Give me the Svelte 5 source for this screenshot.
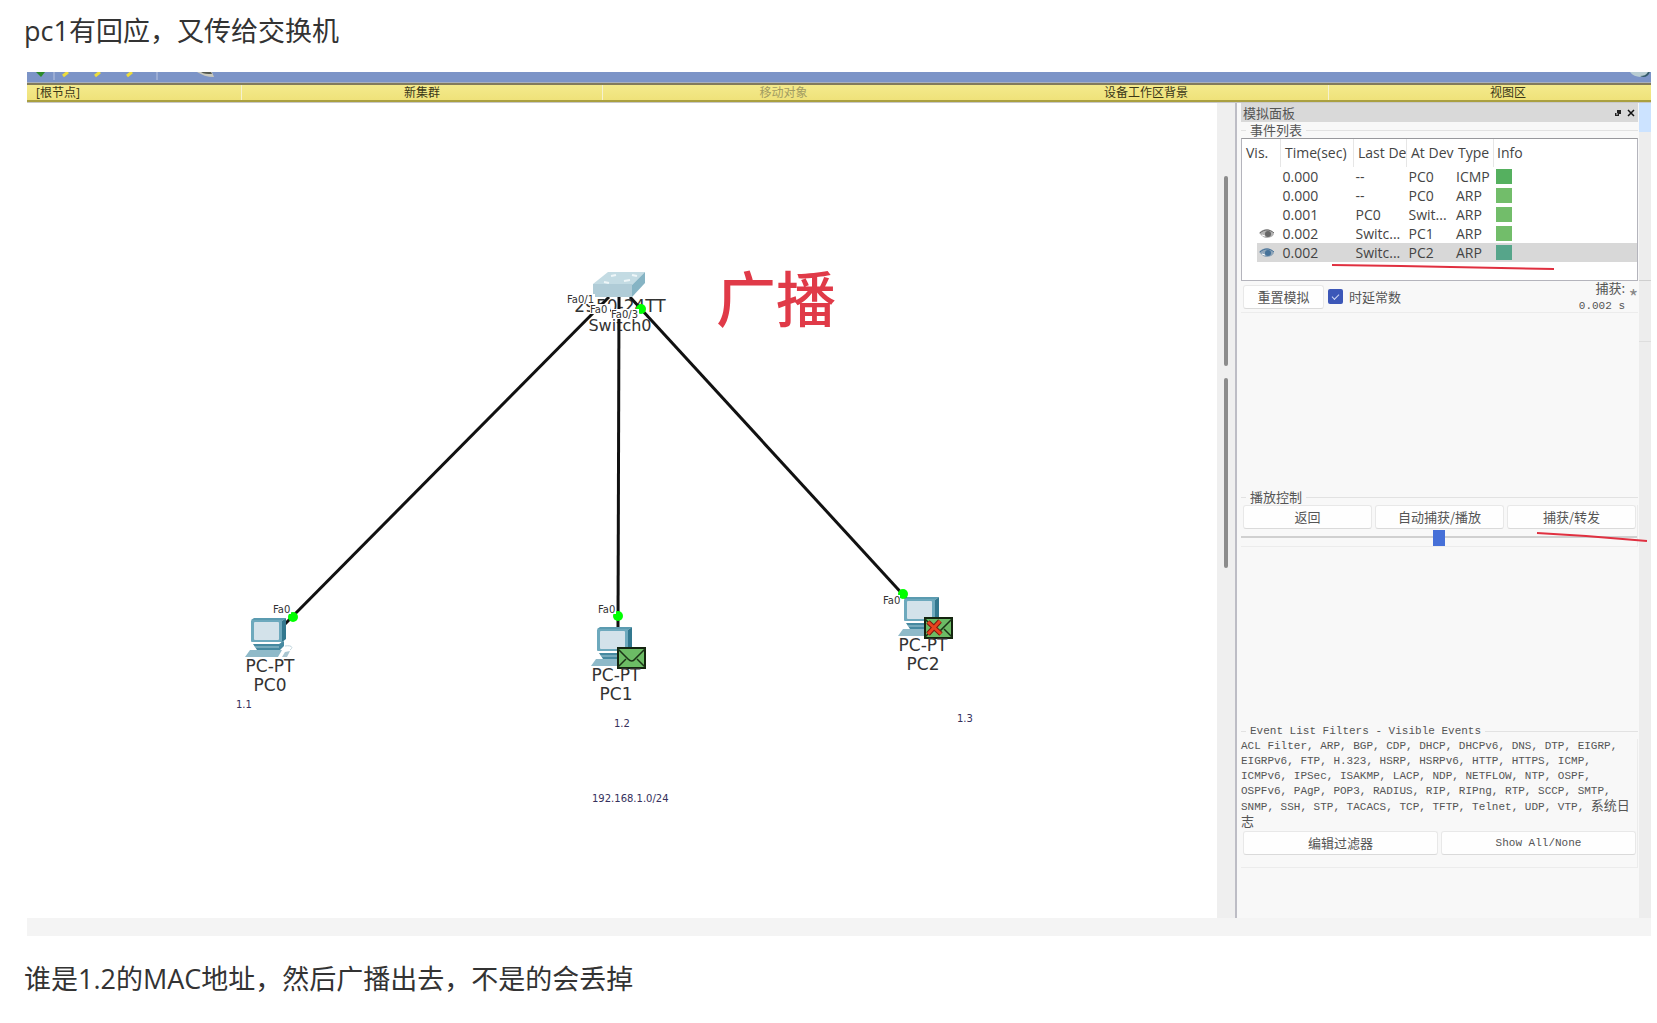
<script>
  const menu = [
    { text: '[根节点]', kind: 'root' },
    { text: '新集群', kind: '' },
    { text: '移动对象', kind: 'muted' },
    { text: '设备工作区背景', kind: 'joined' },
    { text: '视图区', kind: 'last' },
  ];
  const heads = ['Vis.', 'Time(sec)', 'Last Device', 'At Device', 'Type', 'Info'];
  const events = [
    { eye: false, time: '0.000', last: '--', at: 'PC0', type: 'ICMP', tone: 'icmp' },
    { eye: false, time: '0.000', last: '--', at: 'PC0', type: 'ARP', tone: 'arp' },
    { eye: false, time: '0.001', last: 'PC0', at: 'Swit...', type: 'ARP', tone: 'arp' },
    { eye: true, time: '0.002', last: 'Switc...', at: 'PC1', type: 'ARP', tone: 'arp' },
    { eye: true, time: '0.002', last: 'Switc...', at: 'PC2', type: 'ARP', tone: 'picked' },
  ];
  const filters =
    'ACL Filter, ARP, BGP, CDP, DHCP, DHCPv6, DNS, DTP, EIGRP, EIGRPv6, FTP, H.323, HSRP, HSRPv6, HTTP, HTTPS, ICMP, ICMPv6, IPSec, ISAKMP, LACP, NDP, NETFLOW, NTP, OSPF, OSPFv6, PAgP, POP3, RADIUS, RIP, RIPng, RTP, SCCP, SMTP, SNMP, SSH, STP, TACACS, TCP, TFTP, Telnet, UDP, VTP,';
  const hosts = [
    { name: 'PC0', x: 252, y: 620, mail: '' },
    { name: 'PC1', x: 598, y: 629, mail: 'ok' },
    { name: 'PC2', x: 905, y: 599, mail: 'drop' },
  ];
  const ports = [
    { text: 'Fa0/1', x: 567, y: 303, w: 28 },
    { text: 'Fa0', x: 590, y: 313, w: 20 },
    { text: 'Fa0/3', x: 611, y: 318, w: 28 },
    { text: 'Fa0', x: 273, y: 613, w: 18 },
    { text: 'Fa0', x: 598, y: 613, w: 18 },
    { text: 'Fa0', x: 883, y: 604, w: 17 },
  ];
  const notes = [
    { text: '1.1', x: 236, y: 708 },
    { text: '1.2', x: 614, y: 727 },
    { text: '1.3', x: 957, y: 722 },
    { text: '192.168.1.0/24', x: 592, y: 802 },
  ];
  let constantDelay = $state(true);
  let speed = $state(50);
</script>

<main>
  <p>pc1有回应，又传给交换机</p>

  <section class="window">
    <div class="toolbar">
      <svg width="200" height="10" viewBox="27 72 200 10" aria-hidden="true">
        <path d="M36 72h9l-4 5z" fill="#2b8a2b" />
        <path d="M54 72v8M157 72v8" stroke="#b9c4df" />
        <path d="M63 76l5-4M95 76l5-4M127 76l5-4" stroke="#ecdc3c" stroke-width="3" />
        <path d="M197 72h15l2 5c-7 0-12-2-17-5z" fill="#c9c9bd" />
        <path d="M201 72h10l1 2c-5 0-8 0-11-2z" fill="#54584f" />
      </svg>
      <svg width="24" height="10" viewBox="0 0 24 10" aria-hidden="true">
        <path d="M3 0h20c-3 6-15 7-20 0z" fill="#b9cdd2" />
        <path d="M13 4c4 0 6-1 8-4h2c-2 5-6 6-10 4z" fill="#345b6b" />
      </svg>
    </div>
    <nav class="menu">
      {#each menu as item}
        <button class={item.kind}>{item.text}</button>
      {/each}
    </nav>

    <div class="body">
      <div class="canvas">
        <svg width="1190" height="812" viewBox="27 103 1190 812">
          <text class="device" x="620" y="312" text-anchor="middle">2950-24TT</text>
          <text class="device small" x="620" y="331" text-anchor="middle">Switch0</text>
          <g stroke="#111" stroke-width="3" fill="none">
            <path d="M609 297L285 624" />
            <path d="M619 297L618 630" />
            <path d="M630 297L907 599" />
          </g>
          <path d="M593 284L608 272H645L632 285z" fill="#c3dbe3" />
          <path d="M593 284H632V297H595L593 295z" fill="#b0ccd7" />
          <path d="M632 285L645 272V283L632 297z" fill="#86b4c4" />
          <path d="M611 276l5-1M632 275l5 1M604 282l5 1M624 281l6-1" stroke="#eef6f8" stroke-width="2" />
          <circle cx="641" cy="309" r="5" fill="#0f0" />

          {#each hosts as host}
            <g transform={`translate(${host.x} ${host.y})`}>
              <g transform="translate(-1 -2)">
                <path d="M0 2L3 0H35L31 3z" fill="#5b9bb0" />
                <path d="M31 3L35 0V21L30 25z" fill="#32788f" />
                <rect y="2" width="31" height="22" rx="1" fill="#6da9bd" />
                <rect x="3" y="4" width="25" height="18" rx="1" fill="#d3e2ea" />
                <path d="M2 26H28L33 23V28L29 32H6z" fill="#4689a0" />
                <path d="M-1 32H31L27 39H-6z" fill="#8fbac9" />
                <path d="M4 29h24" stroke="#a5cad6" />
              </g>
              {#if host.mail === ''}
                <path d="M30 37l3-5 5-1-3 6z" fill="#a9c6d1" />
                <path d="M33 26c6-1 9 1 5 4" fill="none" stroke="#bfd5dd" />
              {:else}
                <g transform="translate(19 18)">
                  <rect x="1" y="1" width="27" height="20" fill="#6cbc65" stroke="#14240f" stroke-width="2" />
                  <path d="M1 2l10 10q4 4 7 0L28 2M1 20l8-8M28 20l-8-8" fill="none" stroke="#1c3417" stroke-width="1.5" />
                  {#if host.mail === 'drop'}
                    <path d="M4 5l13 12M16 4L4 17" stroke="#7b1a10" stroke-width="5" />
                    <path d="M4 5l13 12M16 4L4 17" stroke="#e8431f" stroke-width="3" />
                  {/if}
                </g>
              {/if}
              <text class="device" x="18" y="52" text-anchor="middle">PC-PT</text>
              <text class="device" x="18" y="71" text-anchor="middle">{host.name}</text>
            </g>
          {/each}

          <circle cx="293" cy="617" r="5" fill="#0f0" />
          <circle cx="618" cy="616" r="5" fill="#0f0" />
          <circle cx="903" cy="594" r="5" fill="#0f0" />
          {#each ports as port}
            <rect x={port.x} y={port.y - 9} width={port.w} height="10" fill="#fff" />
            <text class="port" x={port.x} y={port.y}>{port.text}</text>
          {/each}
          {#each notes as note}
            <text class="note" x={note.x} y={note.y}>{note.text}</text>
          {/each}
          <text class="shout" x="716" y="322">广播</text>
        </svg>
      </div>

      <div class="gutter"><i></i><i></i></div>

      <aside class="panel">
        <header>
          <h2>模拟面板</h2>
          <button aria-label="浮动">
            <svg width="8" height="8" viewBox="0 0 8 8"><path d="M3 1h4v4H5v2H1V4h2z" fill="#222" /><path d="M2 5h2" stroke="#ddd" /></svg>
          </button>
          <button aria-label="关闭">
            <svg width="8" height="8" viewBox="0 0 8 8"><path d="M1 1l6 6M7 1L1 7" stroke="#111" stroke-width="1.5" /></svg>
          </button>
        </header>

        <div class="legend">事件列表</div>
        <div class="list">
          <table>
            <thead>
              <tr>{#each heads as head}<th>{head}</th>{/each}</tr>
            </thead>
            <tbody>
              {#each events as event}
                <tr class={event.tone}>
                  <td>
                    {#if event.eye}
                      <svg class="eye" width="16" height="10" viewBox="0 0 16 10">
                        <path d="M0 4C4-1 12-1 15 5c-3 5-9 5-12 2z" fill="currentColor" opacity=".5" />
                        <path d="M1 4C5 0 11 0 15 4" fill="none" stroke="currentColor" />
                        <circle cx="9" cy="5" r="3" fill="currentColor" />
                        <path d="M3 6l3 1" stroke="#fff" />
                      </svg>
                    {/if}
                  </td>
                  <td>{event.time}</td>
                  <td>{event.last}</td>
                  <td>{event.at}</td>
                  <td>{event.type}</td>
                  <td><span class="swatch"></span></td>
                </tr>
              {/each}
            </tbody>
          </table>
          <svg class="mark under-list" width="224" height="8" viewBox="0 0 224 8" aria-hidden="true">
            <path d="M1 2L70 3 223 6" fill="none" stroke="#e03040" stroke-width="2" />
          </svg>
        </div>

        <div class="controls">
          <button class="push">重置模拟</button>
          <label><input type="checkbox" bind:checked={constantDelay} />时延常数</label>
          <output>捕获:<br /><span class="mono">0.002 s</span></output>
          <span class="star">*</span>
        </div>

        <div class="legend playback">播放控制</div>
        <div class="group play">
          <div class="buttons">
            <button class="push">返回</button>
            <button class="push">自动捕获/播放</button>
            <button class="push">捕获/转发</button>
          </div>
          <input type="range" aria-label="播放速度" bind:value={speed} />
          <svg class="mark under-play" width="112" height="12" viewBox="0 0 112 12" aria-hidden="true">
            <path d="M1 2L50 5 111 10" fill="none" stroke="#e03040" stroke-width="2" />
          </svg>
        </div>

        <div class="legend filters mono">Event List Filters - Visible Events</div>
        <div class="group">
          <p class="mono">{filters} <span>系统日志</span></p>
          <div class="buttons edit">
            <button class="push">编辑过滤器</button>
            <button class="push mono">Show All/None</button>
          </div>
        </div>
      </aside>

      <div class="edge"><i></i><b></b><b></b></div>
    </div>
    <footer></footer>
  </section>

  <p class="after">谁是1.2的MAC地址，然后广播出去，不是的会丢掉</p>
</main>

<style>
  :global(body) {
    margin: 0;
    background: #fff;
  }
  main {
    font-family: 'Open Sans', 'Noto Sans CJK SC', sans-serif;
    color: #333;
  }
  main > p {
    margin: 11px 24px 21px;
    font-size: 27px;
    line-height: 40px;
  }
  main > p.after {
    margin: 23px 24px 20px;
  }
  .window {
    margin: 0 6px 0 27px;
    overflow: hidden;
  }
  button {
    margin: 0;
    padding: 0;
    border: 0;
    background: none;
    font: inherit;
    color: inherit;
    white-space: nowrap;
  }
  .toolbar {
    display: flex;
    justify-content: space-between;
    height: 10px;
    background: #7c94c7;
    border-bottom: 1px solid #a9b0bd;
  }
  .menu {
    display: grid;
    grid-template-columns: 214fr 361fr 362fr 364fr 323fr;
    height: 15px;
    border-top: 2px solid #827b5c;
    border-bottom: 2px solid #aaa040;
    background: linear-gradient(#f4ea8c, #efe27a);
    box-shadow: 0 1px #c8c8c8;
    font-size: 12px;
    line-height: 15px;
    color: #3a3718;
  }
  .menu button {
    overflow: hidden;
    border-left: 1px solid #f5f1cf;
  }
  .menu .root {
    padding-left: 9px;
    border: 0;
    text-align: left;
  }
  .menu .joined {
    border: 0;
  }
  .menu .muted {
    color: #a29c62;
  }
  .menu .last {
    padding-left: 36px;
  }
  .body {
    display: flex;
    padding-top: 1px;
  }
  .canvas {
    flex: 1;
    min-width: 0;
    overflow: hidden;
  }
  .canvas svg {
    display: block;
  }
  .device,
  .port,
  .note {
    font-family: 'DejaVu Sans', sans-serif;
    font-size: 17px;
    fill: #333;
  }
  .device.small {
    font-size: 16px;
  }
  .port {
    font-size: 10px;
  }
  .note {
    font-size: 10px;
    fill: #35305c;
  }
  .shout {
    font-family: 'Noto Sans CJK SC', sans-serif;
    font-size: 60px;
    font-weight: 500;
    fill: #e03a48;
  }
  .gutter {
    display: flex;
    flex-direction: column;
    align-items: center;
    gap: 12px;
    width: 18px;
    padding-top: 73px;
    background: #efefef;
    border-right: 2px solid #bdbdc5;
  }
  .gutter i {
    width: 4px;
    height: 190px;
    border-radius: 2px;
    background: #8c8c8c;
  }
  .panel {
    width: 397px;
    padding: 0 1px 50px 4px;
    background: #f8f8f8;
    font-family: 'Noto Sans CJK SC', sans-serif;
    font-size: 13px;
    color: #555;
  }
  header {
    display: flex;
    align-items: center;
    gap: 5px;
    height: 19px;
    padding: 0 3px 0 2px;
    background: #d9d9d9;
  }
  header button {
    display: flex;
  }
  h2 {
    flex: 1;
    margin: 0;
    font-size: 13px;
    line-height: 18px;
    font-weight: 400;
  }
  .legend {
    display: flex;
    align-items: center;
    gap: 4px;
    height: 16px;
    line-height: 16px;
  }
  .legend::before,
  .legend::after {
    content: '';
    width: 5px;
    height: 1px;
    background: #e2e2e2;
  }
  .legend::after {
    flex: 1;
  }
  .playback {
    margin-top: 176px;
  }
  .filters {
    margin-top: 176px;
  }
  .mono {
    font-family: 'Liberation Mono', 'Noto Sans CJK SC', monospace;
    font-size: 11px;
  }
  .list {
    position: relative;
    height: 141px;
    border: 1px solid #b4b4bc;
    border-top-color: #98989c;
    background: #fff;
    font-family: 'Open Sans', sans-serif;
    font-size: 14px;
    color: #444;
  }
  table {
    width: 100%;
    border-collapse: collapse;
    table-layout: fixed;
  }
  th,
  td {
    padding: 0 0 0 2px;
    overflow: hidden;
    text-align: left;
    font-weight: 400;
    white-space: nowrap;
    line-height: 19px;
  }
  th {
    height: 28px;
    padding: 0 4px;
    border-left: 1px solid #e6e6e6;
    line-height: 28px;
  }
  th:first-child,
  th:nth-child(5) {
    border-left: 0;
  }
  th:last-child {
    padding-left: 3px;
  }
  th:nth-child(1) { width: 30px; }
  th:nth-child(2) { width: 64px; }
  th:nth-child(3) { width: 44px; }
  th:nth-child(4) { width: 39px; }
  th:nth-child(5) { width: 31px; }
  td {
    height: 19px;
  }
  td:first-child {
    padding-left: 17px;
  }
  .eye {
    display: block;
    color: #666;
  }
  .picked .eye {
    color: #467299;
  }
  .picked td {
    background: #d8d8d8;
  }
  .picked td:first-child {
    background: linear-gradient(to right, #fff 15px, #d8d8d8 15px);
  }
  .swatch {
    display: block;
    width: 16px;
    height: 15px;
    background: #72bd6a;
  }
  .icmp .swatch {
    background: #55b05f;
  }
  .picked .swatch {
    background: #56a58a;
  }
  .mark {
    position: absolute;
    pointer-events: none;
  }
  .under-list {
    left: 89px;
    top: 124px;
  }
  .controls {
    display: flex;
    align-items: center;
    height: 31px;
    padding-left: 2px;
    border-bottom: 1px solid #ececec;
  }
  .push {
    flex: 1;
    height: 24px;
    border: 1px solid #e8e8e8;
    border-bottom-color: #dadada;
    border-radius: 3px;
    background: #fefefe;
    line-height: 20px;
  }
  .controls .push {
    flex: 0 0 81px;
  }
  label {
    display: flex;
    flex: 1;
    align-items: center;
    gap: 6px;
    padding-left: 4px;
  }
  input[type='checkbox'] {
    appearance: none;
    width: 15px;
    height: 15px;
    margin: 0;
    border-radius: 2px;
    background: #3c57b8;
  }
  input[type='checkbox']:checked::after {
    content: '';
    display: block;
    width: 6px;
    height: 3px;
    margin: 5px 4px;
    border: solid #cfd8f5;
    border-width: 0 0 1px 1px;
    rotate: -45deg;
  }
  output {
    line-height: 16px;
    text-align: right;
  }
  .star {
    width: 13px;
    font-size: 20px;
    line-height: 24px;
    text-align: right;
    color: #888;
  }
  .group {
    position: relative;
    border: solid #ececec;
    border-width: 0 1px 1px 0;
  }
  .buttons {
    display: flex;
    gap: 3px;
    padding: 0 1px 1px 2px;
  }
  .edit {
    padding: 0 1px 12px 2px;
  }
  input[type='range'] {
    appearance: none;
    display: block;
    width: 100%;
    height: 16px;
    margin: 0;
    background: linear-gradient(#d0d0d0, #d0d0d0) 0 6px / 100% 2px no-repeat;
  }
  input[type='range']::-webkit-slider-thumb {
    appearance: none;
    width: 12px;
    height: 16px;
    background: #4670d8;
  }
  .under-play {
    left: 295px;
    top: 26px;
    z-index: 1;
  }
  .group p {
    margin: 0;
    line-height: 15px;
  }
  .group p span {
    font-size: 13px;
    line-height: 15px;
    word-break: break-all;
  }
  .edge {
    flex: 0 0 12px;
    background: #ededed;
  }
  .edge i {
    display: block;
    height: 29px;
    background: #cce3ff;
  }
  .edge b {
    display: block;
    height: 148px;
    border-bottom: 1px solid #cfcfcf;
  }
  .edge b + b {
    height: 60px;
    border-color: #dedede;
  }
  footer {
    height: 18px;
    background: #f4f4f4;
  }
</style>
